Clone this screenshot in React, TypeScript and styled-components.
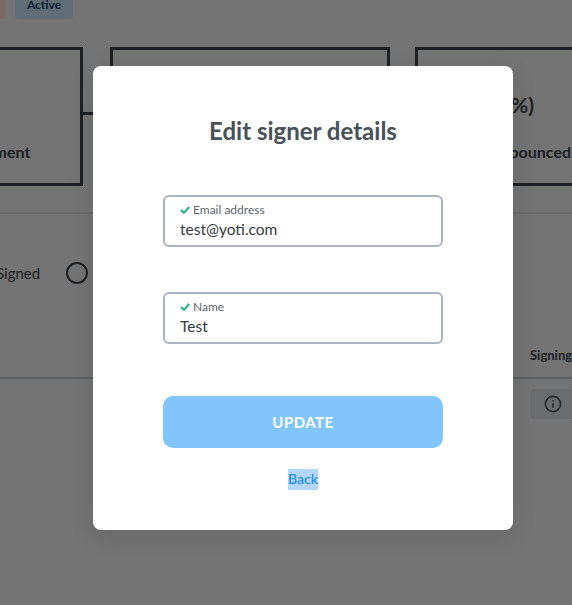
import React from 'react'
import styled, { createGlobalStyle } from 'styled-components'

const GlobalStyle = createGlobalStyle`
	html, body {
		margin: 0;
		padding: 0;
		background: #fff;
		font-family: Lato, "Liberation Sans", sans-serif;
	}
`

const Page = styled.div`
	position: relative;
	width: 572px;
	height: 605px;
	overflow: hidden;
	background: #e8e8e8;
`

const BadgeRow = styled.div`
	display: flex;
	gap: 9px;
	margin: -11px 0 0 -40px;
`

const Badge = styled.div<{ $tone: 'red' | 'blue' }>`
	width: ${(props) => (props.$tone === 'red' ? 46 : 58)}px;
	height: 30px;
	border-radius: 4px;
	background: ${(props) => (props.$tone === 'red' ? '#f2d2cf' : '#c4dcee')};
	color: #0a3a66;
	font-size: 12px;
	font-weight: 700;
	display: flex;
	align-items: flex-end;
	justify-content: center;
	padding-bottom: 7px;
	box-sizing: border-box;
	line-height: 14px;
`

const CardRow = styled.div`
	display: flex;
	align-items: flex-start;
	margin: 28px 0 0 -97px;
`

const Card = styled.div<{ $width: number; $gap?: number }>`
	flex-shrink: 0;
	box-sizing: border-box;
	width: ${(props) => props.$width}px;
	height: 139px;
	margin-left: ${(props) => props.$gap || 0}px;
	border: 3px solid #3c4146;
	display: flex;
	flex-direction: column;
	align-items: center;
	color: #3c4146;
	white-space: nowrap;
`

const CardValue = styled.div`
	margin-top: 41px;
	font-size: 21px;
	line-height: 28px;
	font-weight: 700;
`

const CardLabel = styled.div<{ $noValue?: boolean }>`
	margin-top: ${(props) => (props.$noValue ? 92 : 23)}px;
	font-size: 16px;
	line-height: 20px;
	font-weight: 700;
`

const Connector = styled.div`
	flex-shrink: 0;
	width: 27px;
	height: 3px;
	margin-top: 65px;
	background: #3c4146;
`

const Divider = styled.div<{ $top: number; $color: string }>`
	height: 2px;
	margin-top: ${(props) => props.$top}px;
	background: ${(props) => props.$color};
`

const FilterRow = styled.div`
	display: flex;
	align-items: center;
	gap: 26px;
	height: 26px;
	margin: 46px 0 0 -4px;
	color: #3c4146;
	font-size: 15px;
`

const Radio = styled.div`
	box-sizing: border-box;
	width: 22px;
	height: 22px;
	border: 2px solid #3c4146;
	border-radius: 50%;
`

const TableHead = styled.div`
	margin-top: 59px;
	padding-left: 530px;
	height: 20px;
	line-height: 20px;
	font-size: 13px;
	font-weight: 700;
	color: #3c4146;
	white-space: nowrap;
`

const InfoButton = styled.div`
	display: flex;
	align-items: center;
	justify-content: center;
	width: 46px;
	height: 30px;
	margin: 10px 0 0 530px;
	border-radius: 4px;
	background: #d6d8da;
	color: #4a4f54;
`

const Overlay = styled.div`
	position: absolute;
	inset: 0;
	padding: 66px 0 0 93px;
	background: repeating-conic-gradient(rgba(0, 0, 0, 0.51) 0 25%, rgba(0, 0, 0, 0.49) 0 50%) 0 0 / 2px 2px;
`

const Modal = styled.div`
	box-sizing: border-box;
	width: 420px;
	height: 464px;
	padding-top: 50px;
	border-radius: 8px;
	background: #fff;
	box-shadow: 0 6px 24px rgba(0, 0, 0, 0.12);
	display: flex;
	flex-direction: column;
	align-items: center;
`

const Title = styled.h2`
	margin: 0 0 49px;
	font-size: 24px;
	line-height: 30px;
	font-weight: 700;
	color: #475157;
`

const Field = styled.label`
	box-sizing: border-box;
	display: block;
	width: 280px;
	height: 52px;
	margin-bottom: 45px;
	padding: 5px 15px 0;
	border: 2px solid #aab4c0;
	border-radius: 6px;
`

const FieldLabel = styled.div`
	display: flex;
	align-items: center;
	gap: 3px;
	height: 15px;
	font-size: 12px;
	line-height: 15px;
	color: #5c666d;
`

const FieldInput = styled.input`
	display: block;
	width: 100%;
	height: 22px;
	margin-top: 1px;
	padding: 0;
	border: 0;
	outline: 0;
	background: transparent;
	font-family: inherit;
	font-size: 15.5px;
	color: #333b40;
`

const SubmitButton = styled.button`
	width: 280px;
	height: 52px;
	margin-top: 7px;
	border: 0;
	border-radius: 10px;
	background: #82c5fd;
	color: #fff;
	font-family: inherit;
	font-size: 15px;
	font-weight: 700;
	letter-spacing: 0.5px;
`

const BackLink = styled.a`
	display: block;
	margin-top: 21px;
	height: 21px;
	line-height: 20px;
	background: #b2d6fd;
	color: #1a8cf0;
	font-size: 14px;
	font-weight: 500;
`

const Check = () => (
	<svg width="10" height="8" viewBox="0 0 10 8" fill="none">
		<path d="M1 4l3 2.8L9.2 1" stroke="#1fb486" strokeWidth="2" />
	</svg>
)

const fields = [
	{ label: 'Email address', value: 'test@yoti.com' },
	{ label: 'Name', value: 'Test' },
]

const App: React.FC = () => {
	return (
		<Page>
			<GlobalStyle />
			<BadgeRow>
				<Badge $tone="red" />
				<Badge $tone="blue">Active</Badge>
			</BadgeRow>
			<CardRow>
				<Card $width={180}>
					<CardLabel $noValue>Document</CardLabel>
				</Card>
				<Connector />
				<Card $width={280} />
				<Card $width={180} $gap={25}>
					<CardValue>0 (0%)</CardValue>
					<CardLabel>Email has bounced</CardLabel>
				</Card>
			</CardRow>
			<Divider $top={26} $color="#d0d2d3" />
			<FilterRow>
				Signed
				<Radio />
			</FilterRow>
			<TableHead>Signing</TableHead>
			<Divider $top={12} $color="#b8c0c6" />
			<InfoButton>
				<svg width="18" height="18" viewBox="0 0 18 18" fill="none" stroke="currentColor" strokeWidth="1.6">
					<circle cx="9" cy="9" r="7.6" />
					<path d="M9 8.2v4.6M9 5v1.6" />
				</svg>
			</InfoButton>
			<Overlay>
				<Modal>
					<Title>Edit signer details</Title>
					{fields.map((field) => (
						<Field key={field.label}>
							<FieldLabel>
								<Check />
								{field.label}
							</FieldLabel>
							<FieldInput readOnly value={field.value} />
						</Field>
					))}
					<SubmitButton>UPDATE</SubmitButton>
					<BackLink>Back</BackLink>
				</Modal>
			</Overlay>
		</Page>
	)
}

export default App
